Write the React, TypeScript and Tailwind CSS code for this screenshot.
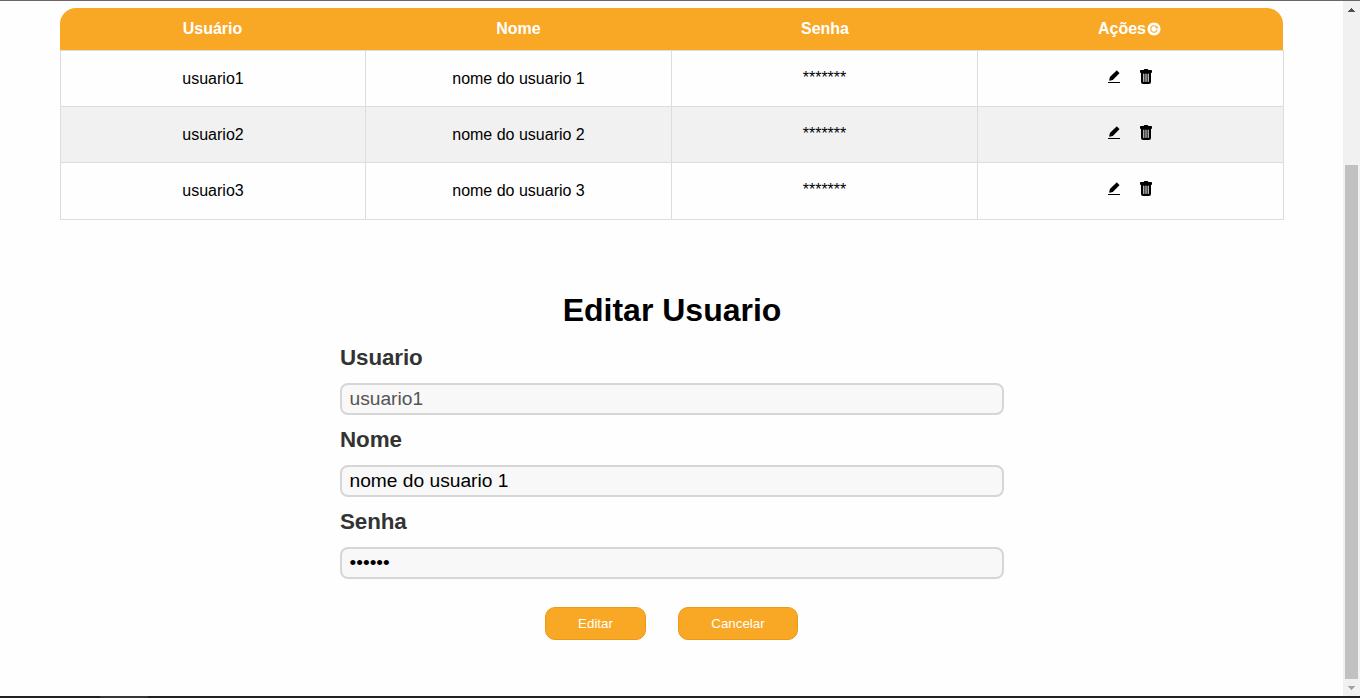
import { IoReloadCircle } from "react-icons/io5";

const users = [1, 2, 3].map((n) => ({ login: `usuario${n}`, name: `nome do usuario ${n}` }));

const cell = "flex items-center justify-center border-r border-[#dddddd]";
const label = "block h-[26px] text-[22.4px] leading-[26px] font-bold tracking-[-0.1px] text-[#333333]";
const input =
  "mt-[12px] block h-8 w-full rounded-lg border-2 border-[#d6d6d6] bg-[#f8f8f8] px-[7.5px] text-[19.2px] outline-none";
const button =
  "h-[33px] rounded-[10px] border border-[#e99a16] bg-[#f9a826] text-[13.333px] text-white";

function EditIcon() {
  return (
    <svg width="16" height="16" viewBox="0 0 16 16" fill="currentColor">
      <path d="M10.3 1.7c.3-.3.6-.3.9 0l2 2c.3.3.3.6 0 .9L6.8 11l-3.1.7c-.4 0-.6-.2-.5-.6L3.9 8zM2.3 13h11.4c.2 0 .3.1.3.3v.7H2v-.7c0-.2.1-.3.3-.3z" />
    </svg>
  );
}

function TrashIcon() {
  return (
    <svg width="16" height="16" viewBox="0 0 16 16" fill="currentColor" fillRule="evenodd">
      <path d="M6 .4c.2-.3.4-.4.8-.4h2.4c.4 0 .6.1.8.4l.3.6H13c.6 0 1 .4 1 1v1.2c0 .5-.4.8-1 .8v9a2 2 0 0 1-2 2H5a2 2 0 0 1-2-2V4c-.6 0-1-.3-1-.8V2c0-.6.4-1 1-1h2.7zM5.3 5v7.5c0 .7 1 .7 1 0V5c0-.7-1-.7-1 0zM7.5 5v7.5c0 .7 1 .7 1 0V5c0-.7-1-.7-1 0zM9.7 5v7.5c0 .7 1 .7 1 0V5c0-.7-1-.7-1 0z" />
    </svg>
  );
}

function UsersTable() {
  return (
    <div className="mt-[7px] ml-[60px] w-[1224px]">
      <div className="grid h-[42px] w-[1223px] grid-cols-[305px_306px_306px_306px] rounded-t-[16px] bg-[#f9a826] font-bold text-white">
        <div className="flex items-center justify-center">Usuário</div>
        <div className="flex items-center justify-center pl-px">Nome</div>
        <div className="flex items-center justify-center pl-[2px]">Senha</div>
        <div className="flex items-center justify-center">
          Ações
          <IoReloadCircle size={16} />
        </div>
      </div>
      <div className="border-t border-l border-[#dddddd]">
        {users.map((user) => (
          <div
            key={user.login}
            className="grid h-14 grid-cols-[305px_306px_306px_306px] border-b border-[#dddddd] last:h-[57px] even:bg-[#f1f1f1]"
          >
            <div className={cell}>{user.login}</div>
            <div className={cell}>{user.name}</div>
            <div className={`${cell} pb-[2px]`}>*******</div>
            <div className={`${cell} items-start gap-4 pt-[18px] pr-px`}>
              <EditIcon />
              <TrashIcon />
            </div>
          </div>
        ))}
      </div>
    </div>
  );
}

function EditForm() {
  return (
    <form className="mt-[70px] ml-[340px] w-[664px]" onSubmit={(e) => e.preventDefault()}>
      <h1 className="mb-[15px] h-10 text-center text-[32px] leading-[40px] font-bold">Editar Usuario</h1>
      <div className="flex flex-col gap-[12px]">
        <div>
          <label className={label}>Usuario</label>
          <input className={`${input} text-[#545454]`} defaultValue="usuario1" disabled />
        </div>
        <div>
          <label className={label}>Nome</label>
          <input className={input} defaultValue="nome do usuario 1" />
        </div>
        <div>
          <label className={label}>Senha</label>
          <input className={input} type="password" defaultValue="123456" />
        </div>
      </div>
      <div className="mt-[28px] flex gap-8 pl-[205px]">
        <button className={`${button} w-[101px]`}>Editar</button>
        <button className={`${button} w-[120px]`}>Cancelar</button>
      </div>
    </form>
  );
}

function Scrollbar() {
  return (
    <div className="flex w-[17px] flex-col items-center bg-[#f1f1f1]">
      <div className="flex h-[17px] items-center">
        <svg width="7" height="4" viewBox="0 0 7 4" shapeRendering="crispEdges">
          <path d="M3 0h1v1h1v1h1v1h1v1H0V3h1V2h1V1h1z" fill="#505050" />
        </svg>
      </div>
      <div className="mt-[147px] h-[514px] w-[13px] bg-[#c1c1c1]" />
      <div className="flex h-[17px] items-center">
        <svg width="7" height="4" viewBox="0 0 7 4" shapeRendering="crispEdges">
          <path d="M0 0h7v1H6v1H5v1H4v1H3V3H2V2H1V1H0z" fill="#a3a3a3" />
        </svg>
      </div>
    </div>
  );
}

export default function App() {
  return (
    <div className="flex h-[698px] w-[1360px] flex-col overflow-hidden bg-[#fefefe] font-['Liberation_Sans',Arial,sans-serif] text-[16px] text-black">
      <div className="h-px shrink-0 bg-[#6b6769]" />
      <div className="flex h-[695px]">
        <main className="w-[1343px]">
          <UsersTable />
          <EditForm />
        </main>
        <Scrollbar />
      </div>
      <div className="flex h-[2px] shrink-0 bg-[#212123]">
        <div className="ml-[100px] w-12 bg-[#353537]" />
      </div>
    </div>
  );
}
